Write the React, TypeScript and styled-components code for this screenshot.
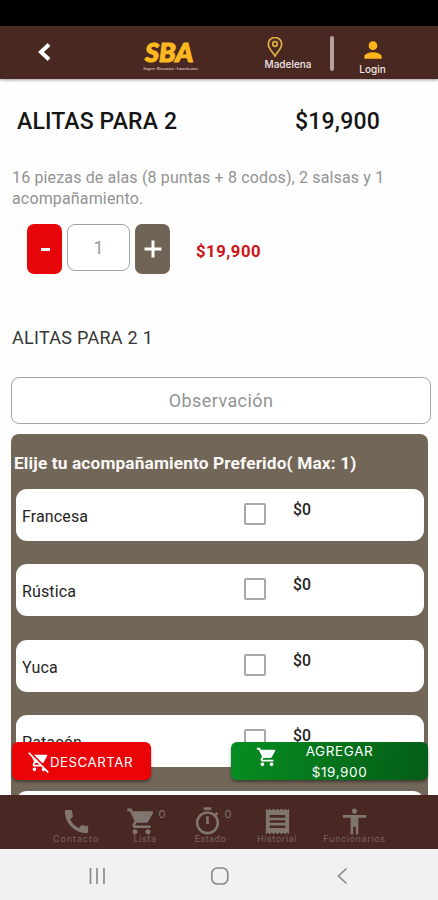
import React from "react";
import styled, { createGlobalStyle } from "styled-components";
import {
  MdAccessibility,
  MdCall,
  MdOutlineTimer,
  MdPerson,
  MdReceipt,
  MdRemoveShoppingCart,
  MdShoppingCart,
} from "react-icons/md";

const GlobalStyle = createGlobalStyle`
  * { box-sizing: border-box; }
  html, body { margin: 0; padding: 0; background: #fff; }
  body { font-family: Roboto, "Liberation Sans", sans-serif; }
  button, input { font-family: inherit; }
`;

const geometric = `Inter, "Open Sans", sans-serif`;

const Screen = styled.div`
  display: flex;
  flex-direction: column;
  width: 438px;
  height: 900px;
  overflow: hidden;
  background: #fefefe;
`;

const StatusBar = styled.div`
  flex: none;
  height: 26px;
  background: #000;
`;

const Header = styled.header`
  flex: none;
  display: flex;
  align-items: flex-start;
  height: 53px;
  background: #492822;
  box-shadow: 0 1px 3px rgba(60, 30, 30, 0.45);
  z-index: 1;
`;

const BackButton = styled.button`
  display: flex;
  margin: 16px 0 0 37px;
  padding: 0;
  border: 0;
  background: none;
`;

const Logo = styled.div`
  display: flex;
  flex-direction: column;
  align-items: flex-start;
  width: 56px;
  margin: 12px 0 0 92px;
`;

const LogoName = styled.span`
  padding-left: 2px;
  font: italic 900 27px/28px Lato, sans-serif;
  letter-spacing: 0;
  color: #fcb81f;
  -webkit-text-stroke: 1.2px #fcb81f;
`;

const LogoTagline = styled.span`
  font: italic 700 5px/5px "Liberation Serif", serif;
  color: #cbb5b0;
  white-space: nowrap;
`;

const HeaderAction = styled.div<{ $left: number; $top: number; $width: number; $gap: number }>`
  display: flex;
  flex-direction: column;
  align-items: center;
  gap: ${(p) => p.$gap}px;
  width: ${(p) => p.$width}px;
  margin: ${(p) => p.$top}px 0 0 ${(p) => p.$left}px;
  color: #fcb51b;
`;

const HeaderLabel = styled.span<{ $shift?: number }>`
  margin-left: ${(p) => p.$shift ?? 0}px;
  font: 500 10px/12px ${geometric};
  color: #f2e6e3;
  white-space: nowrap;
`;

const Divider = styled.div`
  width: 4px;
  height: 35px;
  margin: 10px 0 0 28px;
  border-radius: 2px;
  background: #b5a19d;
`;

const Content = styled.main`
  flex: none;
  height: 716px;
  overflow: hidden;
  padding: 29px 7px 0 11px;
`;

const TitleRow = styled.div`
  display: flex;
  justify-content: space-between;
  height: 28px;
  padding: 0 51px 0 6px;
  font-size: 23px;
  line-height: 28px;
  font-weight: 500;
  color: #151515;
`;

const TitleName = styled.span`
  letter-spacing: 0.13px;
`;

const Price = styled.span`
  letter-spacing: 0.2px;
`;

const Description = styled.p`
  width: 400px;
  margin: 31px 0 0 1px;
  font-size: 16px;
  line-height: 21px;
  letter-spacing: 0.15px;
  color: #929292;
`;

const QuantityRow = styled.div`
  display: flex;
  align-items: flex-start;
  margin: 15px 0 0 16px;
`;

const StepButton = styled.button<{ $color: string }>`
  display: flex;
  align-items: center;
  justify-content: center;
  width: 35px;
  height: 50px;
  padding: 0;
  border: 0;
  border-radius: 7px;
  background: ${(p) => p.$color};
`;

const Sign = styled.svg`
  display: block;
  fill: none;
  stroke: #fff;
  stroke-width: 3;
`;

const QuantityInput = styled.div`
  width: 63px;
  height: 47px;
  margin: 0 5px;
  border: 1px solid #a3a3a3;
  border-radius: 8px;
  font-size: 18px;
  line-height: 45px;
  text-align: center;
  color: #999;
  background: #fff;
`;

const Total = styled.strong`
  margin-left: 26px;
  font-size: 16.7px;
  line-height: 56px;
  letter-spacing: 0.5px;
  color: #cf1419;
`;

const ItemName = styled.h2`
  margin: 45px 0 0 1px;
  font-size: 18px;
  line-height: 26px;
  font-weight: 400;
  letter-spacing: 0.28px;
  color: #353535;
`;

const Observation = styled.div`
  height: 47px;
  margin-top: 26px;
  border: 1px solid #a6a6a6;
  border-radius: 8px;
  font-size: 18px;
  line-height: 45px;
  letter-spacing: 0.42px;
  text-align: center;
  color: #939393;
  background: #fff;
`;

const Options = styled.section`
  width: 417px;
  height: 600px;
  margin-top: 10px;
  padding: 16px 4px 0 5px;
  border-radius: 8px;
  background: #726658;
`;

const OptionsTitle = styled.h3`
  margin: 0 0 13px -2px;
  font-size: 17.3px;
  line-height: 26px;
  font-weight: 700;
  letter-spacing: 0.13px;
  white-space: nowrap;
  color: #faf8f5;
`;

const OptionRow = styled.label`
  display: grid;
  grid-template-columns: 222px 49px 1fr;
  height: 52px;
  margin-bottom: 23.4px;
  padding-left: 6px;
  border-radius: 11px;
  background: #fff;
  color: #252525;
`;

const OptionName = styled.span`
  font-size: 16px;
  line-height: 55px;
  letter-spacing: 0.13px;
`;

const CheckBox = styled.span`
  width: 22px;
  height: 22px;
  margin-top: 14px;
  border: 2px solid #a8a8a8;
  border-radius: 2px;
`;

const OptionPrice = styled.span`
  font-size: 15.8px;
  line-height: 42px;
  font-weight: 500;
`;

const Actions = styled.div`
  position: absolute;
  top: 742px;
  left: 12px;
  width: 416px;
  display: flex;
  justify-content: space-between;
  z-index: 2;
`;

const DiscardButton = styled.button`
  display: flex;
  align-items: center;
  width: 139px;
  height: 38px;
  padding: 2px 0 0 16px;
  border: 0;
  border-radius: 6px;
  background: #eb0407;
  box-shadow: 0 2px 3px rgba(0, 0, 0, 0.4);
  color: #fff;
`;

const DiscardLabel = styled.span`
  font: 400 13.3px/20px ${geometric};
  letter-spacing: 0.5px;
`;

const AddButton = styled.button`
  display: grid;
  grid-template-columns: 54px 109px;
  width: 197px;
  height: 38px;
  padding: 0;
  border: 0;
  border-radius: 6px;
  background: linear-gradient(100deg, #078d22, #045d16);
  box-shadow: 0 2px 3px rgba(0, 0, 0, 0.4);
  color: #fff;
`;

const CartSlot = styled.span`
  padding: 4px 0 0 17px;
`;

const AddLabel = styled.span`
  margin-top: -1px;
  font: 400 13.5px/20.5px ${geometric};
  letter-spacing: 0.6px;
  text-align: center;
`;

const BottomNav = styled.nav`
  flex: none;
  display: flex;
  height: 54px;
  padding-left: 42px;
  background: #492722;
  color: #817570;
  z-index: 1;
`;

const NavItem = styled.div<{ $width: number }>`
  display: flex;
  flex-direction: column;
  align-items: center;
  width: ${(p) => p.$width}px;
  padding-top: 11px;
`;

const NavSymbol = styled.div`
  display: flex;
  height: 30px;
`;

const NavCount = styled.span`
  width: 10px;
  margin: 1px -12px 0 2px;
  font: 400 11px/15px ${geometric};
`;

const NavLabel = styled.span<{ $spacing: number; $shift: number }>`
  margin: -3px 0 0 ${(p) => p.$shift}px;
  font: 400 9px/12px ${geometric};
  letter-spacing: ${(p) => p.$spacing}px;
  white-space: nowrap;
  color: #776660;
`;

const SystemBar = styled.div`
  flex: none;
  display: grid;
  grid-template-columns: 20px 20px 20px;
  column-gap: 103px;
  align-items: center;
  height: 51px;
  padding: 2px 0 0 87px;
  background: #f1f1f1;
`;

const SystemIcon = styled.svg`
  width: 20px;
  height: 20px;
  fill: none;
  stroke: #8b8b8b;
  stroke-width: 1.7;
`;

const options = ["Francesa", "Rústica", "Yuca", "Patacón", ""];

const navItems = [
  { label: "Contacto", icon: MdCall, size: 31, width: 68, spacing: 0.9, shift: 0 },
  { label: "Lista", icon: MdShoppingCart, size: 31, width: 62, spacing: 0.6, shift: 8, count: "0" },
  { label: "Estado", icon: MdOutlineTimer, size: 31, width: 70, spacing: 0.4, shift: 7, count: "0" },
  { label: "Historial", icon: MdReceipt, size: 31, width: 70, spacing: 0.6, shift: 0 },
  { label: "Funcionarios", icon: MdAccessibility, size: 31, width: 85, spacing: 0.65, shift: 0 },
];

export default function App() {
  return (
    <Screen>
      <GlobalStyle />
      <StatusBar />
      <Header>
        <BackButton aria-label="Volver">
          <svg width="14" height="20" viewBox="0 0 14 20" fill="none" stroke="#fff" strokeWidth="4">
            <path d="M12 2.5 4 10l8 7.5" />
          </svg>
        </BackButton>
        <Logo>
          <LogoName>SBA</LogoName>
          <LogoTagline>Super Broaster Americano</LogoTagline>
        </Logo>
        <HeaderAction $left={49} $top={11} $width={54} $gap={1}>
          <svg width="16" height="20" viewBox="0 0 16 20" fill="none" stroke="#dfb042" strokeWidth="1.7">
            <path d="M8 19C6 15.4 1.3 11.5 1.3 7.2a6.7 6.7 0 0 1 13.4 0C14.7 11.5 10 15.4 8 19Z" />
            <circle cx="8" cy="7" r="2.3" />
          </svg>
          <HeaderLabel $shift={26}>Madelena</HeaderLabel>
        </HeaderAction>
        <Divider />
        <HeaderAction $left={23} $top={11} $width={31} $gap={0}>
          <MdPerson size={26} />
          <HeaderLabel>Login</HeaderLabel>
        </HeaderAction>
      </Header>
      <Content>
        <TitleRow>
          <TitleName>ALITAS PARA 2</TitleName>
          <Price>$19,900</Price>
        </TitleRow>
        <Description>
          16 piezas de alas (8 puntas + 8 codos), 2 salsas y 1 acompañamiento.
        </Description>
        <QuantityRow>
          <StepButton $color="#e7070b" aria-label="Menos">
            <Sign width="18" height="18">
              <path d="M5 9.5h9" />
            </Sign>
          </StepButton>
          <QuantityInput>1</QuantityInput>
          <StepButton $color="#6f6455" aria-label="Más">
            <Sign width="18" height="18">
              <path d="M0.5 9h17M9 0.5v17" />
            </Sign>
          </StepButton>
          <Total>$19,900</Total>
        </QuantityRow>
        <ItemName>ALITAS PARA 2 1</ItemName>
        <Observation>Observación</Observation>
        <Options>
          <OptionsTitle>Elije tu acompañamiento Preferido( Max: 1)</OptionsTitle>
          {options.map((name) => (
            <OptionRow key={name}>
              <OptionName>{name}</OptionName>
              {name && <CheckBox />}
              {name && <OptionPrice>$0</OptionPrice>}
            </OptionRow>
          ))}
        </Options>
      </Content>
      <Actions>
        <DiscardButton>
          <MdRemoveShoppingCart size={22} />
          <DiscardLabel>DESCARTAR</DiscardLabel>
        </DiscardButton>
        <AddButton>
          <CartSlot>
            <MdShoppingCart size={22} />
          </CartSlot>
          <AddLabel>
            AGREGAR
            <br />
            $19,900
          </AddLabel>
        </AddButton>
      </Actions>
      <BottomNav>
        {navItems.map(({ label, icon: Icon, size, width, spacing, shift, count }) => (
          <NavItem key={label} $width={width}>
            <NavSymbol>
              <Icon size={size} />
              {count && <NavCount>{count}</NavCount>}
            </NavSymbol>
            <NavLabel $spacing={spacing} $shift={shift}>
              {label}
            </NavLabel>
          </NavItem>
        ))}
      </BottomNav>
      <SystemBar>
        <SystemIcon viewBox="0 0 20 20">
          <path d="M3.5 2v16M10 2v16M17 2v16" />
        </SystemIcon>
        <SystemIcon viewBox="0 0 20 20">
          <rect x="1.8" y="2" width="16" height="16" rx="5.5" />
        </SystemIcon>
        <SystemIcon viewBox="0 0 20 20">
          <path d="M13.5 2.5 5.5 10l8 7.5" />
        </SystemIcon>
      </SystemBar>
    </Screen>
  );
}
